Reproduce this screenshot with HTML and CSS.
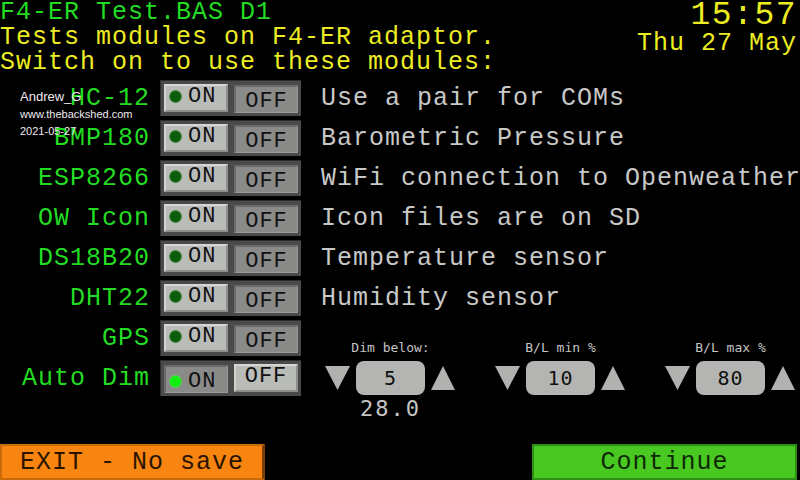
FILE: index.html
```html
<!DOCTYPE html>
<html>
<head>
<meta charset="utf-8">
<link rel="stylesheet" href="styles.css">
</head>
<body>
<div class="screen">
  <header class="head">
    <div class="titles">
      <div class="title">F4-ER Test.BAS D1</div>
      <div class="sub">Tests modules on F4-ER adaptor.</div>
      <div class="sub">Switch on to use these modules:</div>
    </div>
    <div class="clockbox">
      <div class="clock">15:57</div>
      <div class="date">Thu 27 May</div>
    </div>
  </header>

  <div class="rows">
    <div class="label">HC-12</div>
    <div class="toggle"><div class="face raised on"><span class="dot"></span>ON</div><div class="face pressed">OFF</div></div>
    <div class="desc">Use a pair for COMs</div>

    <div class="label">BMP180</div>
    <div class="toggle"><div class="face raised on"><span class="dot"></span>ON</div><div class="face pressed">OFF</div></div>
    <div class="desc">Barometric Pressure</div>

    <div class="label">ESP8266</div>
    <div class="toggle"><div class="face raised on"><span class="dot"></span>ON</div><div class="face pressed">OFF</div></div>
    <div class="desc">WiFi connection to Openweather</div>

    <div class="label">OW Icon</div>
    <div class="toggle"><div class="face raised on"><span class="dot"></span>ON</div><div class="face pressed">OFF</div></div>
    <div class="desc">Icon files are on SD</div>

    <div class="label">DS18B20</div>
    <div class="toggle"><div class="face raised on"><span class="dot"></span>ON</div><div class="face pressed">OFF</div></div>
    <div class="desc">Temperature sensor</div>

    <div class="label">DHT22</div>
    <div class="toggle"><div class="face raised on"><span class="dot"></span>ON</div><div class="face pressed">OFF</div></div>
    <div class="desc">Humidity sensor</div>

    <div class="label">GPS</div>
    <div class="toggle"><div class="face raised on"><span class="dot"></span>ON</div><div class="face pressed">OFF</div></div>

    <div class="label">Auto Dim</div>
    <div class="toggle"><div class="face pressed on"><span class="dot lit"></span>ON</div><div class="face raised">OFF</div></div>

    <div class="dimarea">
      <div class="spin">
        <div class="spin-label">Dim below:</div>
        <svg class="tri" width="25" height="24" viewBox="0 0 25 24"><polygon points="0,0 25,0 12.5,24" fill="#b1b2af"/></svg>
        <div class="valbox">5</div>
        <svg class="tri" width="24" height="24" viewBox="0 0 24 24"><polygon points="12,0 24,24 0,24" fill="#b1b2af"/></svg>
        <div class="reading">28.0</div>
      </div>
      <div class="spin">
        <div class="spin-label">B/L min %</div>
        <svg class="tri" width="25" height="24" viewBox="0 0 25 24"><polygon points="0,0 25,0 12.5,24" fill="#b1b2af"/></svg>
        <div class="valbox">10</div>
        <svg class="tri" width="24" height="24" viewBox="0 0 24 24"><polygon points="12,0 24,24 0,24" fill="#b1b2af"/></svg>
      </div>
      <div class="spin">
        <div class="spin-label">B/L max %</div>
        <svg class="tri" width="25" height="24" viewBox="0 0 25 24"><polygon points="0,0 25,0 12.5,24" fill="#b1b2af"/></svg>
        <div class="valbox">80</div>
        <svg class="tri" width="24" height="24" viewBox="0 0 24 24"><polygon points="12,0 24,24 0,24" fill="#b1b2af"/></svg>
      </div>
    </div>
  </div>

  <div class="actions">
    <div class="btn exit">EXIT - No save</div>
    <div class="btn go">Continue</div>
  </div>

  <div class="watermark">
    <div class="wm-name">Andrew_G</div>
    <div class="wm-small">www.thebackshed.com</div>
    <div class="wm-small">2021-05-27</div>
  </div>
</div>
</body>
</html>
```
FILE: styles.css
```css
html, body {
  margin: 0;
  padding: 0;
  background: #000;
}

.screen {
  position: relative;
  width: 800px;
  height: 480px;
  overflow: hidden;
  display: flex;
  flex-direction: column;
  background: #000;
  font-family: "Liberation Mono", "DejaVu Sans Mono", monospace;
  font-size: 25px;
  line-height: 25px;
  letter-spacing: 1px;
  white-space: nowrap;
}

/* header */
.head {
  display: flex;
  justify-content: space-between;
  height: 75px;
  margin-bottom: 5px;
}
.title { color: #22dc22; }
.sub { color: #ecec22; }

.clockbox {
  display: flex;
  flex-direction: column;
  align-items: flex-end;
  padding-right: 3px;
}
.clock {
  color: #ecec22;
  font-size: 33px;
  line-height: 28px;
  letter-spacing: 1.5px;
  padding-top: 2px;
}
.date {
  color: #ecec22;
  margin-top: 1px;
}

/* rows */
.rows {
  display: grid;
  grid-template-columns: 150px 141px 1fr;
  grid-auto-rows: 36px;
  column-gap: 10px;
  row-gap: 4px;
}
.label {
  grid-column: 1;
  color: #22dc22;
  text-align: right;
  align-self: center;
}
.desc {
  grid-column: 3;
  color: #c8c8c8;
  padding-left: 10px;
  padding-top: 1px;
  align-self: center;
}

.toggle {
  grid-column: 2;
  box-sizing: border-box;
  display: flex;
  gap: 6px;
  padding: 3px;
  background: #4a4a4a;
  border-top: 1px solid #2c2c2c;
  border-left: 1px solid #2c2c2c;
}
.face {
  box-sizing: border-box;
  height: 28px;
  display: flex;
  align-items: center;
  justify-content: center;
  color: #111;
  font-size: 22px;
  letter-spacing: 1px;
}
.face.on {
  width: 64px;
  justify-content: flex-start;
  padding-left: 4px;
}
.face:not(.on) { width: 64px; }
.face.raised {
  align-self: flex-start;
  background: #babcb8;
  border-top: 2px solid #d6d7d4;
  border-left: 2px solid #d2d3d0;
  border-bottom: 2px solid #8e8f8c;
  border-right: 2px solid #8e8f8c;
  padding-bottom: 3px;
}
.face.pressed {
  align-self: flex-end;
  background: #8a8b88;
  border-top: 2px solid #6a6a6a;
  border-left: 2px solid #6a6a6a;
  border-bottom: 1px solid #9a9a98;
  border-right: 1px solid #9a9a98;
  padding-top: 3px;
}
.dot {
  width: 11px;
  height: 11px;
  border-radius: 50%;
  background: #0e5c0e;
  box-shadow: 0 0 0 1px #4f8a4c;
  margin-right: 7px;
  flex: none;
}
.dot.lit {
  background: #12f012;
  box-shadow: 0 0 0 1px #5fc95c;
}

/* dim controls */
.dimarea {
  grid-column: 3;
  grid-row: 7 / span 2;
  display: flex;
  gap: 40px;
  padding: 20px 0 0 14px;
}
.spin {
  display: grid;
  grid-template-columns: 25px 69px 24px;
  grid-template-rows: 16px 34px auto;
  column-gap: 6px;
  row-gap: 5px;
  align-items: center;
}
.spin-label {
  grid-column: 2;
  grid-row: 1;
  justify-self: center;
  font-family: "DejaVu Sans Mono", monospace;
  font-size: 13px;
  line-height: 16px;
  letter-spacing: 0;
  color: #c4c4c4;
}
.tri { grid-row: 2; display: block; }
.valbox {
  grid-column: 2;
  grid-row: 2;
  height: 34px;
  border-radius: 8px;
  background: #b4b5b2;
  color: #111;
  display: flex;
  align-items: center;
  justify-content: center;
  font-family: "DejaVu Sans Mono", monospace;
  font-size: 20px;
  letter-spacing: 1px;
}
.reading {
  grid-column: 2;
  grid-row: 3;
  justify-self: center;
  margin-top: -3px;
  font-family: "DejaVu Sans Mono", monospace;
  font-size: 22px;
  line-height: 24px;
  letter-spacing: 2px;
  color: #c4c4c4;
}

/* bottom buttons */
.actions {
  margin-top: auto;
  display: flex;
  justify-content: space-between;
  padding-right: 3px;
}
.btn {
  box-sizing: border-box;
  width: 265px;
  height: 36px;
  display: flex;
  align-items: center;
  justify-content: center;
}
.btn.exit {
  background: #f7850f;
  border: 2px solid #c86a08;
  border-right: 3px solid #7c3f02;
  color: #2a1400;
}
.btn.go {
  background: #48c820;
  border: 2px solid #2e8e14;
  color: #0e2a06;
}

/* watermark overlay */
.watermark {
  position: absolute;
  left: 20px;
  top: 88px;
  font-family: "Liberation Sans", Arial, sans-serif;
  letter-spacing: 0;
  color: #eeeaee;
  pointer-events: none;
}
.wm-name { font-size: 13px; line-height: 18px; }
.wm-small { font-size: 11px; line-height: 17px; }
```
